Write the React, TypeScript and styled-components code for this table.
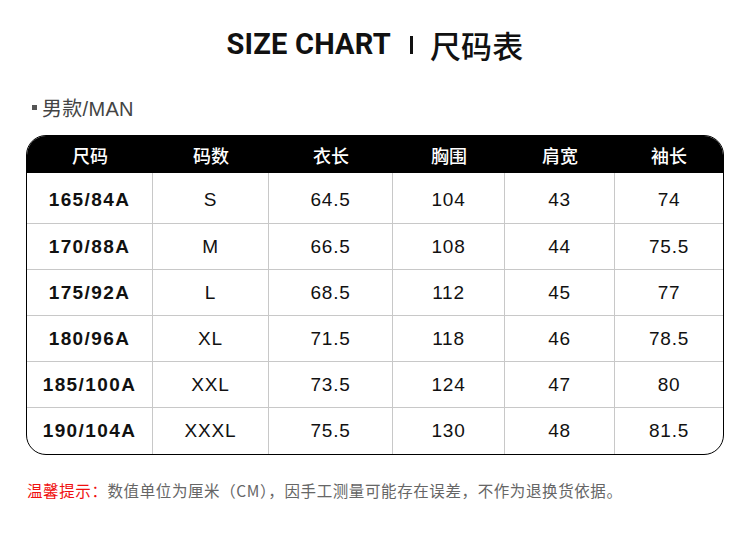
import React from "react";
import styled, { createGlobalStyle } from "styled-components";

const Global = createGlobalStyle`
  html, body { margin: 0; padding: 0; background: #fff; }
  body { font-family: "Liberation Sans", "Noto Sans CJK SC", sans-serif; }
`;

const Page = styled.div`
  width: 750px;
  height: 534px;
  box-sizing: border-box;
  padding: 26px 26px 0 26px;
  display: flex;
  flex-direction: column;
`;

const Title = styled.h1`
  margin: 0;
  height: 36px;
  display: flex;
  align-items: center;
  justify-content: center;
  font-family: "Roboto", "Noto Sans CJK SC", sans-serif;
  font-weight: 700;
  font-size: 29px;
  color: #111;
  letter-spacing: 0.2px;
`;

const TitleEn = styled.span``;

const TitleSep = styled.span`
  display: inline-block;
  width: 3px;
  height: 18px;
  background: #111;
  margin: 2px 17px 0 19px;
`;

const TitleCn = styled.span`
  font-family: "Noto Sans CJK SC", sans-serif;
  font-weight: 500;
  font-size: 31px;
`;

const Section = styled.div`
  margin-top: 32px;
  display: flex;
  align-items: center;
  height: 26px;
  padding-left: 6px;
  font-family: "Liberation Sans", "Noto Sans CJK SC", sans-serif;
  font-size: 20px;
  color: #444;
  letter-spacing: 0.3px;
`;

const Bullet = styled.span`
  width: 5px;
  height: 5px;
  background: #555;
  margin-right: 5px;
  margin-top: 1px;
`;

const Table = styled.div`
  margin-top: 15px;
  width: 698px;
  box-sizing: border-box;
  border: 1.5px solid #000;
  border-radius: 20px;
  overflow: hidden;
  display: grid;
  grid-template-columns: 126px 116px 124px 112px 110px 1fr;
`;

const HeadCell = styled.div`
  height: 37px;
  background: #000;
  color: #fff;
  display: flex;
  align-items: center;
  justify-content: center;
  font-family: "Noto Sans CJK SC", sans-serif;
  font-size: 18px;
  font-weight: 500;
`;

const Cell = styled.div<{ $bold?: boolean; $first?: boolean; $lastRow?: boolean; $lastCol?: boolean }>`
  height: ${(p) => (p.$first ? 51 : 46)}px;
  box-sizing: border-box;
  display: flex;
  align-items: center;
  justify-content: center;
  padding-top: ${(p) => (p.$first ? 3 : 0)}px;
  border-bottom: ${(p) => (p.$lastRow ? "none" : "1px solid #c8c8c8")};
  border-right: ${(p) => (p.$lastCol ? "none" : "1px solid #c8c8c8")};
  font-family: "Liberation Sans", "Noto Sans CJK SC", sans-serif;
  font-size: 19px;
  font-weight: ${(p) => (p.$bold ? 700 : 400)};
  letter-spacing: ${(p) => (p.$bold ? 1.4 : 0.8)}px;
  color: #111;
`;

const Note = styled.p`
  margin: 24px 0 0 1px;
  font-family: "Noto Sans CJK SC", sans-serif;
  font-size: 15.5px;
  letter-spacing: 0.6px;
  color: #666;
`;

const Warn = styled.span`
  color: #f01010;
`;

const headers = ["尺码", "码数", "衣长", "胸围", "肩宽", "袖长"];
const rows = [
  ["165/84A", "S", "64.5", "104", "43", "74"],
  ["170/88A", "M", "66.5", "108", "44", "75.5"],
  ["175/92A", "L", "68.5", "112", "45", "77"],
  ["180/96A", "XL", "71.5", "118", "46", "78.5"],
  ["185/100A", "XXL", "73.5", "124", "47", "80"],
  ["190/104A", "XXXL", "75.5", "130", "48", "81.5"],
];

export default function App() {
  return (
    <>
      <Global />
      <Page>
        <Title>
          <TitleEn>SIZE CHART</TitleEn>
          <TitleSep />
          <TitleCn>尺码表</TitleCn>
        </Title>
        <Section>
          <Bullet />
          男款/MAN
        </Section>
        <Table>
          {headers.map((h) => (
            <HeadCell key={h}>{h}</HeadCell>
          ))}
          {rows.map((r, ri) =>
            r.map((c, ci) => (
              <Cell
                key={ri + "-" + ci}
                $bold={ci === 0}
                $first={ri === 0}
                $lastRow={ri === rows.length - 1}
                $lastCol={ci === r.length - 1}
              >
                {c}
              </Cell>
            ))
          )}
        </Table>
        <Note>
          <Warn>温馨提示：</Warn>数值单位为厘米（CM），因手工测量可能存在误差，不作为退换货依据。
        </Note>
      </Page>
    </>
  );
}
